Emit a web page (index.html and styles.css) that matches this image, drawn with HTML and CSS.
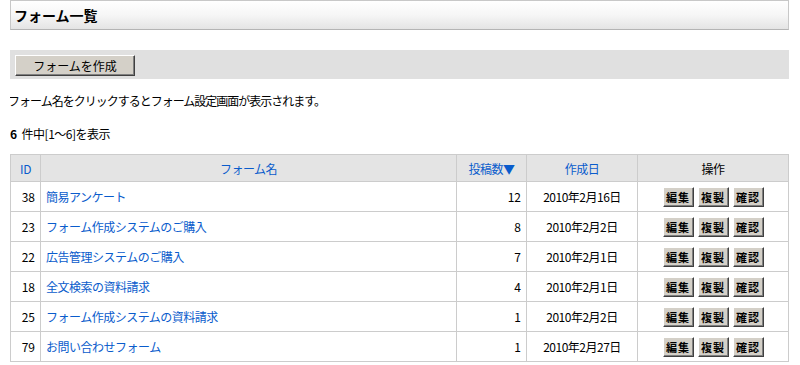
FILE: index.html
```html
<!DOCTYPE html>
<html lang="ja">
<head>
<meta charset="utf-8">
<title>フォーム一覧</title>
<link rel="stylesheet" href="styles.css">
</head>
<body>

<h1 class="page-title">フォーム一覧</h1>

<div class="toolbar">
  <button class="btn btn--create">フォームを作成</button>
</div>

<p class="note">フォーム名をクリックするとフォーム設定画面が表示されます。</p>

<p class="count"><b>6</b>件中[1～6]を表示</p>

<table class="form-list">
  <thead>
    <tr>
      <th class="col-id"><a href="#">ID</a></th>
      <th class="col-name"><a href="#">フォーム名</a></th>
      <th class="col-posts"><a href="#">投稿数▼</a></th>
      <th class="col-date"><a href="#">作成日</a></th>
      <th class="col-ops">操作</th>
    </tr>
  </thead>
  <tbody>
    <tr>
      <td class="num">38</td>
      <td class="name"><a href="#">簡易アンケート</a></td>
      <td class="num">12</td>
      <td class="date">2010年2月16日</td>
      <td class="ops"><button class="btn">編集</button><button class="btn">複製</button><button class="btn">確認</button></td>
    </tr>
    <tr>
      <td class="num">23</td>
      <td class="name"><a href="#">フォーム作成システムのご購入</a></td>
      <td class="num">8</td>
      <td class="date">2010年2月2日</td>
      <td class="ops"><button class="btn">編集</button><button class="btn">複製</button><button class="btn">確認</button></td>
    </tr>
    <tr>
      <td class="num">22</td>
      <td class="name"><a href="#">広告管理システムのご購入</a></td>
      <td class="num">7</td>
      <td class="date">2010年2月1日</td>
      <td class="ops"><button class="btn">編集</button><button class="btn">複製</button><button class="btn">確認</button></td>
    </tr>
    <tr>
      <td class="num">18</td>
      <td class="name"><a href="#">全文検索の資料請求</a></td>
      <td class="num">4</td>
      <td class="date">2010年2月1日</td>
      <td class="ops"><button class="btn">編集</button><button class="btn">複製</button><button class="btn">確認</button></td>
    </tr>
    <tr>
      <td class="num">25</td>
      <td class="name"><a href="#">フォーム作成システムの資料請求</a></td>
      <td class="num">1</td>
      <td class="date">2010年2月2日</td>
      <td class="ops"><button class="btn">編集</button><button class="btn">複製</button><button class="btn">確認</button></td>
    </tr>
    <tr>
      <td class="num">79</td>
      <td class="name"><a href="#">お問い合わせフォーム</a></td>
      <td class="num">1</td>
      <td class="date">2010年2月27日</td>
      <td class="ops"><button class="btn">編集</button><button class="btn">複製</button><button class="btn">確認</button></td>
    </tr>
  </tbody>
</table>

</body>
</html>
```

FILE: styles.css
```css
body {
  margin: 0 11px 0 10px;
  font-family: "MS PGothic", "Noto Sans CJK JP", sans-serif;
  font-size: 12px;
  color: #000;
  background-color: #fff;
}

a {
  color: #0a5ccc;
  text-decoration: none;
}

.page-title {
  margin: 0;
  height: 28px;
  line-height: 28px;
  padding-left: 3px;
  font-size: 14px;
  font-weight: bold;
  border: 1px solid #c8c8c8;
  border-bottom-color: #b4b4b4;
  background: linear-gradient(#ffffff, #f6f6f6 50%, #e4e4e4);
}

.toolbar {
  margin-top: 20px;
  height: 29px;
  padding: 5px 0 0 5px;
  box-sizing: border-box;
  background-color: #e0e0e0;
}

.btn {
  font-family: inherit;
  font-size: 11px;
  color: #000;
  background-color: #d4d0c8;
  border: 1px solid;
  border-color: #fff #404040 #404040 #fff;
  box-shadow: inset -1px -1px 0 #808080;
  padding: 0;
  cursor: pointer;
}

.btn--create {
  width: 120px;
  height: 21px;
  font-size: 12px;
}

.note {
  margin: 13px 0 0 -2px;
  letter-spacing: -1px;
}

.count {
  margin: 16px 0 0 0;
  letter-spacing: -0.5px;
}

.count b {
  margin-right: 5px;
}

.form-list {
  margin-top: 12px;
  width: 100%;
  border-collapse: collapse;
  border: 1px solid #cccccc;
}

.form-list th,
.form-list td {
  border: 1px solid #cccccc;
  padding: 0 5px;
}

.form-list th {
  height: 26px;
  font-weight: normal;
  text-align: center;
  background-color: #e4e4e4;
  letter-spacing: -0.5px;
}

.form-list td {
  height: 29px;
}

.col-id { width: 19px; }
.col-name { width: auto; }
.col-posts { width: 59px; }
.col-date { width: 100px; }
.col-ops { width: 140px; }

.num {
  text-align: right;
}

.name {
  letter-spacing: -0.5px;
}

.date {
  text-align: center;
  letter-spacing: -0.5px;
}

.ops {
  text-align: center;
  font-size: 0;
}

.ops .btn {
  width: 31px;
  height: 20px;
  margin: 0 2px;
  font-weight: bold;
  letter-spacing: 1px;
}
```
